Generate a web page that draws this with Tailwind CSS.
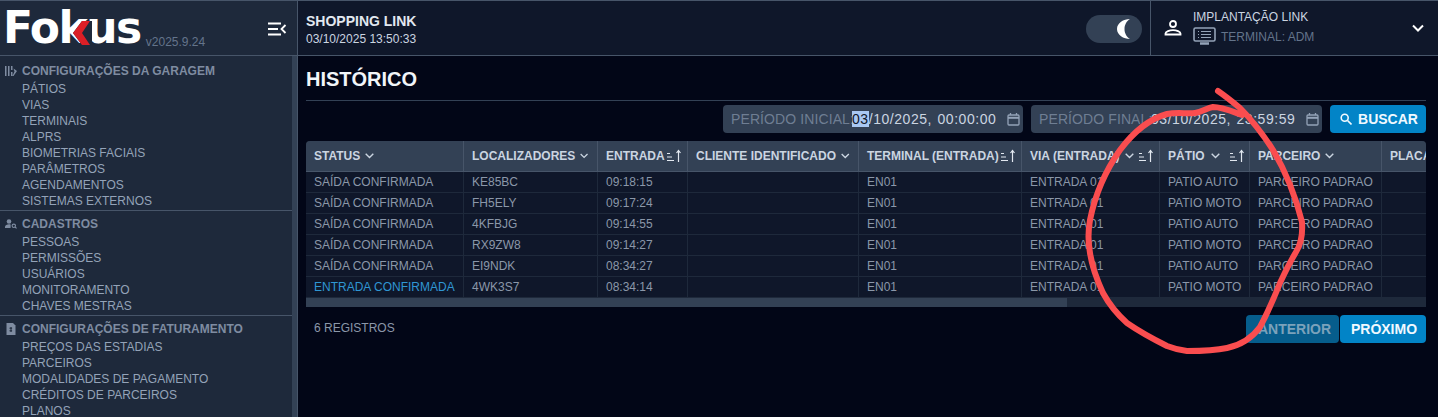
<!DOCTYPE html>
<html lang="pt-BR">
<head>
<meta charset="utf-8">
<title>Histórico</title>
<script src="https://cdn.jsdelivr.net/npm/@tailwindcss/browser@4"></script>
</head>
<body class="m-0 bg-[#020617]">
<div class="relative flex h-[417px] w-[1438px] overflow-hidden border-t border-[#475569] bg-[#020617] font-['Liberation_Sans',sans-serif] text-xs text-[#94a3b8]">

  <!-- SIDEBAR -->
  <aside class="flex h-full w-[298px] shrink-0 flex-col border-r border-[#475569] bg-[#1e293b]">
    <div class="flex h-[55px] shrink-0 items-start border-b border-[#475569] pl-[3px]">
      <div class="relative mt-[2px] flex h-[50px] items-center font-['DejaVu_Sans',sans-serif] text-[44px] leading-none font-bold tracking-[-1.5px] text-white">
        <span>Fok</span><span>us</span>
        <svg class="absolute left-[70px] top-[18px]" width="19" height="24" viewBox="0 0 19 24"><path d="M9 0 0 12l9 12h10V0z" fill="#1e293b"/><path d="M17 0H9L0 12l9 12h8L9 12z" fill="#dc1f26"/></svg>
      </div>
      <span class="mt-[33px] ml-[5px] text-xs text-[#64748b]">v2025.9.24</span>
      <svg class="ml-[62px] mt-[20px]" width="20" height="16" viewBox="0 0 20 16" fill="none" stroke="#fff" stroke-width="1.8"><path d="M1 2.500h13M1 8h10M1 13.500h13M18.500 4l-4 4 4 4"/></svg>
    </div>
    <div class="flex min-h-0 flex-1">
      <nav class="w-[292px] overflow-hidden pt-[6px]">
        <section class="border-b border-[#475569] pb-[1px]">
          <h3 class="mb-[1px] flex h-[18px] items-center gap-[5px] pl-[5px] leading-4 font-bold text-[#7f8ca1]">
            <svg width="12" height="12" viewBox="0 0 12 12" fill="#7f8ca1"><path d="M0 1h1.500v10H0zM3 1h1.500v10H3zM6 1h1.500v4H6zM6 7h1.500v4H6zM8.500 3.500 12 6 8.500 11H7.500l2-4.500z"/></svg>
            CONFIGURAÇÕES DA GARAGEM
          </h3>
          <ul class="pl-[22px] leading-4">
            <li>PÁTIOS</li><li>VIAS</li><li>TERMINAIS</li><li>ALPRS</li><li>BIOMETRIAS FACIAIS</li><li>PARÂMETROS</li><li>AGENDAMENTOS</li><li>SISTEMAS EXTERNOS</li>
          </ul>
        </section>
        <section class="border-b border-[#475569] pt-[4px] pb-[1px]">
          <h3 class="mb-[1px] flex h-[18px] items-center gap-[5px] pl-[5px] leading-4 font-bold text-[#7f8ca1]">
            <svg width="12" height="12" viewBox="0 0 12 12" fill="#7f8ca1"><circle cx="4" cy="3.500" r="2.300"/><path d="M0 10V9c0-1.800 2-2.700 4-2.700.6 0 1.200.1 1.600.2V10z"/><circle cx="8.800" cy="7.800" r="1.700" fill="none" stroke="#7f8ca1" stroke-width="1.100"/><path d="m10 9 1.600 1.400" stroke="#7f8ca1" stroke-width="1.100"/></svg>
            CADASTROS
          </h3>
          <ul class="pl-[22px] leading-4">
            <li>PESSOAS</li><li>PERMISSÕES</li><li>USUÁRIOS</li><li>MONITORAMENTO</li><li>CHAVES MESTRAS</li>
          </ul>
        </section>
        <section class="pt-[4px]">
          <h3 class="mb-[1px] flex h-[18px] items-center gap-[5px] pl-[5px] leading-4 font-bold text-[#7f8ca1]">
            <svg width="12" height="12" viewBox="0 0 12 12"><path d="M1.500 0H8l2.500 2.500V12h-9z" fill="#7f8ca1"/><path d="M6 4v5M4.500 5.200h2.600M4.500 7.800h2.600" stroke="#1e293b" stroke-width="1"/></svg>
            CONFIGURAÇÕES DE FATURAMENTO
          </h3>
          <ul class="pl-[22px] leading-4">
            <li>PREÇOS DAS ESTADIAS</li><li>PARCEIROS</li><li>MODALIDADES DE PAGAMENTO</li><li>CRÉDITOS DE PARCEIROS</li><li>PLANOS</li>
          </ul>
        </section>
      </nav>
      <div class="w-[5px] bg-[#334155]"></div>
    </div>
  </aside>

  <!-- MAIN -->
  <div class="flex min-w-0 flex-1 flex-col">
    <header class="flex h-[55px] shrink-0 items-stretch border-b border-[#475569] bg-[#0f172a]">
      <div class="flex flex-1 flex-col justify-center pl-2 pt-[1px] text-[#e2e8f0]">
        <div class="text-sm leading-5 font-bold">SHOPPING LINK</div>
        <div class="text-xs leading-4 text-[#cbd5e1]">03/10/2025 13:50:33</div>
      </div>
      <div class="mr-2 flex items-center pt-[2px]">
        <div class="flex h-7 w-14 items-center justify-end rounded-full bg-[#334155] pr-[10px]">
          <svg width="16" height="20" viewBox="0 0 16 20"><path d="M14 0C7.500 0 1 4 1 10s6.500 10 13 10c-3.200-2-5.500-5.500-5.500-10S10.800 2 14 0z" fill="#fff"/></svg>
        </div>
      </div>
      <div class="flex w-[288px] items-center border-l border-[#475569]">
        <svg class="ml-[13px]" width="18" height="18" viewBox="0 0 18 18" fill="none" stroke="#fff" stroke-width="1.800"><circle cx="9" cy="5" r="3"/><path d="M1.500 15.500v-1c0-2 4-3.300 7.500-3.300s7.500 1.300 7.500 3.300v1z"/></svg>
        <div class="ml-[11px] flex-1">
          <div class="-mt-[1px] leading-4 text-[#cbd5e1]">IMPLANTAÇÃO LINK</div>
          <div class="mt-[2px] flex items-center gap-[5px] leading-4 text-[#64748b]">
            <svg width="23" height="19" viewBox="0 0 23 19" fill="none" stroke="#94a3b8"><rect x="1" y="1" width="21" height="13" rx="1.500" stroke-width="1.600"/><path d="M5 4.500h1M8 4.500h10M5 7.500h1M8 7.500h10M5 10.500h1M8 10.500h10" stroke-width="1.200"/><path d="M7 16.500h9" stroke-width="2.500"/></svg>
            TERMINAL: ADM
          </div>
        </div>
        <svg class="mr-[14px]" width="12" height="8" viewBox="0 0 12 8" fill="none" stroke="#fff" stroke-width="2"><path d="m1 1.500 5 5 5-5"/></svg>
      </div>
    </header>

    <main class="flex flex-1 flex-col px-2 pr-3">
      <h1 class="mt-[11px] h-[34px] border-b border-[#334155] pb-1 text-xl leading-6 font-bold text-[#f1f5f9]">HISTÓRICO</h1>

      <form class="mt-[4px] flex h-7 justify-end gap-2">
        <div class="flex w-[300px] items-center rounded bg-[#334155] pl-2 text-sm text-[#6f7e93]">
          <span class="w-[121px] tracking-[0.1px] whitespace-nowrap">PERÍODO INICIAL:</span>
          <span class="flex-1 tracking-[0.55px] whitespace-nowrap text-[#cbd5e1]"><span class="bg-[#a9c8f2] text-[#0f172a]">03</span>/10/2025<span class="mr-[1px]">,</span> 00:00:00</span>
          <svg class="mr-[3px]" width="13" height="13" viewBox="0 0 13 13" fill="none" stroke="#94a3b8" stroke-width="1.300"><rect x="1" y="2" width="11" height="10" rx="1"/><path d="M1 4.800h11" stroke-width="2"/><path d="M3.500 0v2M9.500 0v2"/></svg>
        </div>
        <div class="relative flex w-[291px] items-center rounded bg-[#334155] pl-2 text-sm text-[#6f7e93]">
          <span class="w-[112px] tracking-[0.1px] whitespace-nowrap">PERÍODO FINAL:</span>
          <span class="flex-1 tracking-[0.55px] whitespace-nowrap text-[#cbd5e1]">03/10/2025<span class="mr-[1px]">,</span> 23:59:59</span>
          <svg class="mr-[3px]" width="13" height="13" viewBox="0 0 13 13" fill="none" stroke="#94a3b8" stroke-width="1.300"><rect x="1" y="2" width="11" height="10" rx="1"/><path d="M1 4.800h11" stroke-width="2"/><path d="M3.500 0v2M9.500 0v2"/></svg>
        </div>
        <button type="button" class="flex w-[96px] items-center justify-center gap-[6px] rounded bg-[#0284c7] pl-[2px] text-sm font-bold text-[#f0f9ff]">
          <svg width="12" height="12" viewBox="0 0 12 12" fill="none" stroke="#f0f9ff" stroke-width="1.600"><circle cx="4.700" cy="4.700" r="3.500"/><path d="m7.500 7.500 4 4"/></svg>
          BUSCAR
        </button>
      </form>

      <div class="mt-2 w-[1120px] overflow-hidden rounded-t bg-[#1e293b]">
        <table class="w-[1170px] table-fixed border-collapse text-left text-xs">
          <colgroup>
            <col class="w-[157px]"><col class="w-[134px]"><col class="w-[90px]"><col class="w-[171px]"><col class="w-[163px]"><col class="w-[138px]"><col class="w-[90px]"><col class="w-[132px]"><col class="w-[95px]">
          </colgroup>
          <thead class="bg-[#334155] text-[#cbd5e1]">
            <tr class="h-[30px] border-b border-[#475569]">
              <th class="border-r border-[#475569] px-2 font-bold"><span class="flex items-center gap-[5px]">STATUS <svg width="9" height="6" viewBox="0 0 9 6" fill="none" stroke="#cbd5e1" stroke-width="1.400"><path d="m.7.800 3.800 3.800L8.300.8"/></svg></span></th>
              <th class="border-r border-[#475569] pr-2 pl-[8.500px] font-bold"><span class="flex items-center gap-[5px]">LOCALIZADORES <svg width="9" height="6" viewBox="0 0 9 6" fill="none" stroke="#cbd5e1" stroke-width="1.400"><path d="m.7.800 3.800 3.800L8.300.8"/></svg></span></th>
              <th class="border-r border-[#475569] pl-[8.500px] font-bold"><span class="flex items-center">ENTRADA <svg class="ml-[2px]" width="15" height="14" viewBox="0 0 15 14" fill="none" stroke="#e2e8f0" stroke-width="1.200"><path d="M0 4.500h3M0 8h5M0 11.500h7M11.500 13V1.500M9.500 4l2-2.500 2 2.500"/></svg></span></th>
              <th class="border-r border-[#475569] pr-2 pl-[8.500px] font-bold"><span class="flex items-center gap-[5px] whitespace-nowrap">CLIENTE IDENTIFICADO <svg width="9" height="6" viewBox="0 0 9 6" fill="none" stroke="#cbd5e1" stroke-width="1.400"><path d="m.7.800 3.800 3.800L8.300.8"/></svg></span></th>
              <th class="border-r border-[#475569] pl-[8.500px] font-bold"><span class="flex items-center whitespace-nowrap">TERMINAL (ENTRADA) <svg class="ml-[2px]" width="15" height="14" viewBox="0 0 15 14" fill="none" stroke="#e2e8f0" stroke-width="1.200"><path d="M0 4.500h3M0 8h5M0 11.500h7M11.500 13V1.500M9.500 4l2-2.500 2 2.500"/></svg></span></th>
              <th class="border-r border-[#475569] pl-[8.500px] font-bold"><span class="flex items-center whitespace-nowrap">VIA (ENTRADA) <svg class="ml-[5px]" width="9" height="6" viewBox="0 0 9 6" fill="none" stroke="#cbd5e1" stroke-width="1.400"><path d="m.7.800 3.800 3.800L8.300.8"/></svg><svg class="ml-[5px]" width="15" height="14" viewBox="0 0 15 14" fill="none" stroke="#e2e8f0" stroke-width="1.200"><path d="M0 4.500h3M0 8h5M0 11.500h7M11.500 13V1.500M9.500 4l2-2.500 2 2.500"/></svg></span></th>
              <th class="border-r border-[#475569] pl-[8.500px] font-bold"><span class="flex items-center whitespace-nowrap">PÁTIO <svg class="ml-[6px]" width="9" height="6" viewBox="0 0 9 6" fill="none" stroke="#cbd5e1" stroke-width="1.400"><path d="m.7.800 3.800 3.800L8.300.8"/></svg><svg class="ml-[10px]" width="15" height="14" viewBox="0 0 15 14" fill="none" stroke="#e2e8f0" stroke-width="1.200"><path d="M0 4.500h3M0 8h5M0 11.500h7M11.500 13V1.500M9.500 4l2-2.500 2 2.500"/></svg></span></th>
              <th class="border-r border-[#475569] pr-2 pl-[8.500px] font-bold"><span class="flex items-center gap-[5px]">PARCEIRO <svg width="9" height="6" viewBox="0 0 9 6" fill="none" stroke="#cbd5e1" stroke-width="1.400"><path d="m.7.800 3.800 3.800L8.300.8"/></svg></span></th>
              <th class="pr-2 pl-[8.500px] font-bold whitespace-nowrap">PLACA</th>
            </tr>
          </thead>
          <tbody class="bg-[#0f172a] text-[#8b97a9] [&_td]:h-[21px] [&_td]:border-r [&_td]:border-[#1e293b] [&_td]:pr-2 [&_td]:pl-[8.500px] [&_td:first-child]:pl-2 [&_td]:leading-[14px] [&_td]:whitespace-nowrap [&_tr]:border-b [&_tr]:border-[#1e293b]">
            <tr><td>SAÍDA CONFIRMADA</td><td>KE85BC</td><td>09:18:15</td><td></td><td>EN01</td><td>ENTRADA 01</td><td>PATIO AUTO</td><td>PARCEIRO PADRAO</td><td></td></tr>
            <tr><td>SAÍDA CONFIRMADA</td><td>FH5ELY</td><td>09:17:24</td><td></td><td>EN01</td><td>ENTRADA 01</td><td>PATIO MOTO</td><td>PARCEIRO PADRAO</td><td></td></tr>
            <tr><td>SAÍDA CONFIRMADA</td><td>4KFBJG</td><td>09:14:55</td><td></td><td>EN01</td><td>ENTRADA 01</td><td>PATIO AUTO</td><td>PARCEIRO PADRAO</td><td></td></tr>
            <tr><td>SAÍDA CONFIRMADA</td><td>RX9ZW8</td><td>09:14:27</td><td></td><td>EN01</td><td>ENTRADA 01</td><td>PATIO MOTO</td><td>PARCEIRO PADRAO</td><td></td></tr>
            <tr><td>SAÍDA CONFIRMADA</td><td>EI9NDK</td><td>08:34:27</td><td></td><td>EN01</td><td>ENTRADA 01</td><td>PATIO AUTO</td><td>PARCEIRO PADRAO</td><td></td></tr>
            <tr><td class="text-[#2f96d3]">ENTRADA CONFIRMADA</td><td>4WK3S7</td><td>08:34:14</td><td></td><td>EN01</td><td>ENTRADA 01</td><td>PATIO MOTO</td><td>PARCEIRO PADRAO</td><td></td></tr>
          </tbody>
        </table>
        <div class="h-[9px] bg-[#1e293b]"><div class="h-full w-[761px] bg-[#334155]"></div></div>
      </div>

      <div class="mt-2 flex h-7 items-center justify-between text-[#8b97a9]">
        <span class="pb-[2px] pl-2">6 REGISTROS</span>
        <div class="flex gap-px text-sm font-bold">
          <button type="button" class="h-7 w-[93px] rounded bg-[#065d8c] pl-[4px] text-[#7ba2bb]">ANTERIOR</button>
          <button type="button" class="h-7 w-[86px] rounded bg-[#0284c7] pl-[2px] text-[#f0f9ff]">PRÓXIMO</button>
        </div>
      </div>
    </main>
  </div>

  <!-- marcação à mão sobre a captura -->
  <svg class="pointer-events-none absolute left-0 top-[-1px]" width="1438" height="417" viewBox="0 0 1438 417" fill="none" stroke="#fa4d4f" stroke-width="6" stroke-linecap="round" stroke-linejoin="round">
    <path d="M1218 91C1228 98 1234 103 1240 108C1252 120 1264 136 1273 150C1286 172 1296 198 1302 222C1303 236 1301 244 1296 252C1290 262 1285 272 1280 283C1274 298 1268 312 1260 327C1252 338 1241 345 1227 348C1213 351 1199 351 1187 351C1179 350 1172 348 1167 346C1153 339 1140 332 1127 323C1117 314 1109 304 1103 293C1097 280 1092 266 1090 253C1088 242 1088 231 1090 220C1095 195 1106 170 1120 150C1132 134 1149 119 1167 114C1177 112 1187 114 1195 113C1202 112 1207 108 1213 107C1222 107 1231 111 1242 115"/>
  </svg>
</div>
</body>
</html>
